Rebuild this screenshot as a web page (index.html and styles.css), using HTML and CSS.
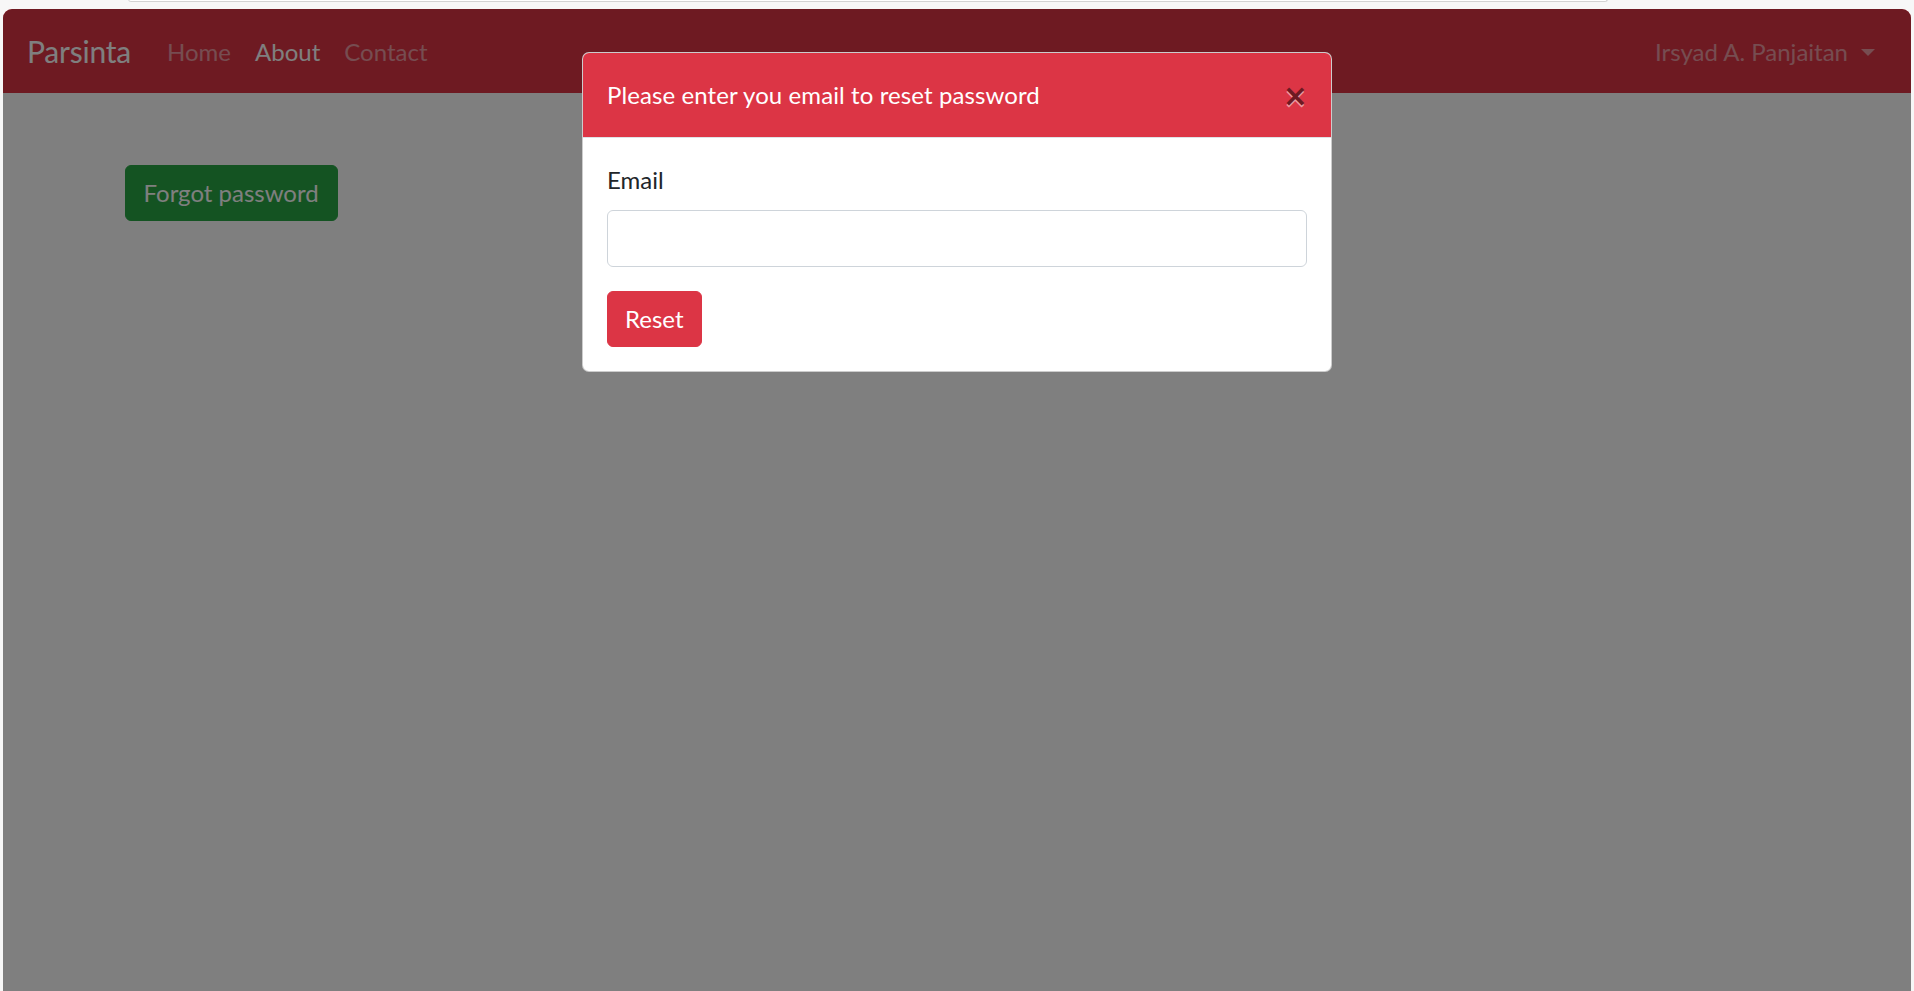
FILE: index.html
```html
<!DOCTYPE html>
<html lang="en">
<head>
<meta charset="utf-8">
<title>Parsinta</title>
<link rel="stylesheet" href="styles.css">
</head>
<body>
<div class="chrome">
  <div class="addressbar"></div>
</div>
<div class="window">
  <nav class="navbar">
    <a class="brand" href="#">Parsinta</a>
    <ul class="nav">
      <li><a class="nav-link" href="#">Home</a></li>
      <li><a class="nav-link active" href="#">About</a></li>
      <li><a class="nav-link" href="#">Contact</a></li>
    </ul>
    <ul class="nav nav-right">
      <li><a class="nav-link dropdown-toggle" href="#">Irsyad A. Panjaitan</a></li>
    </ul>
  </nav>
  <main class="container">
    <button class="btn btn-success" type="button">Forgot password</button>
  </main>

  <div class="backdrop"></div>
  <div class="modal">
    <div class="modal-header">
      <div class="modal-title">Please enter you email to reset password</div>
      <button class="close" type="button" aria-label="Close">&times;</button>
    </div>
    <div class="modal-body">
      <div class="form-group">
        <label class="label" for="email">Email</label>
        <input class="form-control" id="email" type="email">
      </div>
      <button class="btn btn-danger" type="button">Reset</button>
    </div>
  </div>
</div>
</body>
</html>
```
FILE: styles.css
```css
* { box-sizing: border-box; }

html, body {
  margin: 0;
  height: 100%;
}

body {
  background: #f7f7f7;
  font-family: "Lato", "Open Sans", sans-serif;
  font-size: 24px;
  line-height: 1.5;
  color: #212529;
  overflow: hidden;
}

.chrome {
  height: 9px;
  position: relative;
}

.addressbar {
  margin-left: 128px;
  width: 1480px;
  height: 3px;
  background: #ffffff;
  border: 1px solid #d3d3d3;
  border-top: none;
  border-radius: 0 0 8px 8px;
  position: relative;
  top: -1px;
}

.window {
  position: relative;
  margin: 0 3px;
  height: 982px;
  background: #ffffff;
  border-radius: 9px 9px 0 0;
  overflow: hidden;
}

/* navbar */
.navbar {
  display: flex;
  align-items: center;
  padding: 12px 24px;
  background: #dc3545;
}

.brand {
  font-size: 30px;
  line-height: 45px;
  padding: 7.5px 0;
  margin-right: 24px;
  letter-spacing: -0.2px;
  color: #ffffff;
  text-decoration: none;
}

.nav {
  display: flex;
  list-style: none;
  margin: 0;
  padding: 0;
}

.nav-right {
  margin-left: auto;
}

.nav-link {
  display: block;
  padding: 13px 12px 11px;
  line-height: 36px;
  color: rgba(255, 255, 255, 0.5);
  text-decoration: none;
}

.nav-link.active {
  color: #ffffff;
}

.dropdown-toggle::after {
  content: "";
  display: inline-block;
  margin-left: 13px;
  vertical-align: 5px;
  border-top: 7.2px solid;
  border-right: 7.2px solid transparent;
  border-left: 7.2px solid transparent;
}

/* page */
.container {
  max-width: 1710px;
  margin: 72px auto 0;
  padding: 0 22.5px;
}

.btn {
  display: inline-block;
  font-family: inherit;
  font-size: 24px;
  line-height: 36px;
  padding: 9px 18px;
  border: 1.5px solid transparent;
  border-radius: 6px;
  color: #ffffff;
  cursor: pointer;
}

.btn-success {
  background: #28a745;
  border-color: #28a745;
}

.btn-danger {
  background: #dc3545;
  border-color: #dc3545;
  padding: 9px 17px;
}

/* modal */
.backdrop {
  position: absolute;
  inset: 0;
  background: rgba(0, 0, 0, 0.5);
}

.modal {
  position: absolute;
  top: 43px;
  left: 50%;
  width: 750px;
  margin-left: -375px;
  background: #ffffff;
  border: 1.5px solid rgba(0, 0, 0, 0.2);
  border-radius: 7px;
  overflow: hidden;
}

.modal-header {
  display: flex;
  align-items: flex-start;
  padding: 24px;
  background: #dc3545;
  border-bottom: 1.5px solid #dee2e6;
}

.modal-title {
  font-size: 24px;
  line-height: 36px;
  letter-spacing: 0.1px;
  color: #ffffff;
}

.close {
  margin: -24px -24px -24px auto;
  padding: 28px 23px 24px 24px;
  background: transparent;
  border: 0;
  font-family: "DejaVu Sans", sans-serif;
  font-size: 30px;
  font-weight: 700;
  line-height: 1;
  color: #000000;
  text-shadow: 0 1.5px 0 #ffffff;
  opacity: 0.5;
  cursor: pointer;
}

.modal-body {
  padding: 24px;
}

.form-group {
  margin-bottom: 24px;
}

.label {
  display: inline-block;
  margin-bottom: 12px;
}

.form-control {
  display: block;
  width: 100%;
  height: 57px;
  padding: 9px 18px;
  font-family: inherit;
  font-size: 24px;
  border: 1.5px solid #ced4da;
  border-radius: 6px;
  background: #ffffff;
}
```
